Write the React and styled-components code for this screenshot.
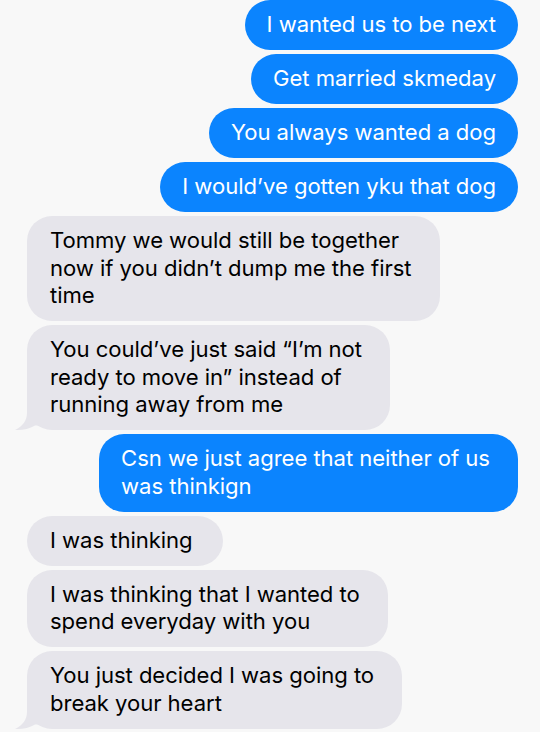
import React from "react";
import styled, { createGlobalStyle } from "styled-components";

const GlobalStyle = createGlobalStyle`
  html, body {
    margin: 0;
    padding: 0;
    background: #f8f8f8;
  }
  body {
    font-family: Inter, "Noto Sans", "Liberation Sans", sans-serif;
    -webkit-font-smoothing: antialiased;
  }
`;

const Thread = styled.div`
  display: flex;
  flex-direction: column;
  gap: 4px;
  padding: 0 22px 0 27px;
  width: 540px;
  box-sizing: border-box;
  overflow: hidden;
`;

const rightPad = (p) => (p.$multi ? 28 : p.$me ? 22 : 30);

const Bubble = styled.div`
  position: relative;
  align-self: ${(p) => (p.$me ? "flex-end" : "flex-start")};
  background: ${(p) => (p.$me ? "#0b84fe" : "#e6e5eb")};
  color: ${(p) => (p.$me ? "#ffffff" : "#000000")};
  font-size: 22.1px;
  line-height: 27.5px;
  letter-spacing: -0.05px;
  white-space: nowrap;
  padding: 11.25px ${rightPad}px 11.25px ${(p) => (p.$me ? 22 : 23)}px;
  border-radius: 25px;
`;

const Line = styled.span`
  position: relative;
`;

const Tail = styled.svg`
  position: absolute;
  left: -12px;
  bottom: -1px;
  width: 28px;
  height: 26px;
  overflow: visible;
`;

const BottomEdge = styled.div`
  height: 2px;
  margin-top: 2px;
  background: linear-gradient(90deg, #eef6fb 0%, #dcf0fb 60%, #d7eefb 100%);
`;

const messages = [
  { me: true, lines: ["I wanted us to be next"] },
  { me: true, lines: ["Get married skmeday"] },
  { me: true, lines: ["You always wanted a dog"] },
  { me: true, lines: ["I would\u2019ve gotten yku that dog"] },
  {
    me: false,
    lines: [
      "Tommy we would still be together",
      "now if you didn\u2019t dump me the first",
      "time",
    ],
  },
  {
    me: false,
    tail: true,
    lines: [
      "You could\u2019ve just said \u201CI\u2019m not",
      "ready to move in\u201D instead of",
      "running away from me",
    ],
  },
  {
    me: true,
    lines: ["Csn we just agree that neither of us", "was thinkign"],
  },
  { me: false, lines: ["I was thinking"] },
  {
    me: false,
    lines: ["I was thinking that I wanted to", "spend everyday with you"],
  },
  {
    me: false,
    tail: true,
    lines: ["You just decided I was going to", "break your heart"],
  },
];

function TailShape() {
  return (
    <Tail viewBox="0 0 28 26" aria-hidden="true">
      <path
        d="M12 0 L12 8 C12 15 8 21 0 25 C7 25.5 14 24 20 20.5 L28 20.5 L28 0 Z"
        fill="#e6e5eb"
      />
    </Tail>
  );
}

export default function App() {
  return (
    <>
      <GlobalStyle />
      <Thread>
        {messages.map((m, i) => (
          <Bubble key={i} $me={m.me} $multi={m.lines.length > 1}>
            {m.tail && <TailShape />}
            {m.lines.map((l, j) => (
              <React.Fragment key={j}>
                {j > 0 && <br />}
                <Line>{l}</Line>
              </React.Fragment>
            ))}
          </Bubble>
        ))}
        <BottomEdge />
      </Thread>
    </>
  );
}
